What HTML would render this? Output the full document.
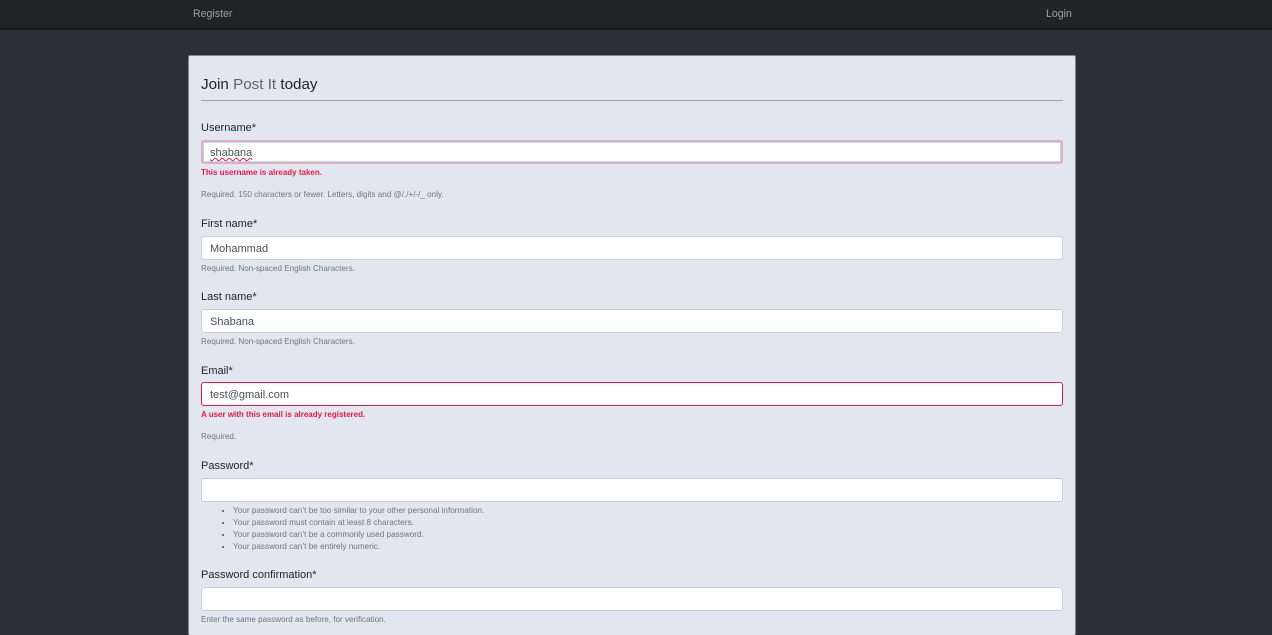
<!DOCTYPE html>
<html style="height:635px;overflow:hidden"><head><meta charset="utf-8"><style>
*{margin:0;padding:0;box-sizing:border-box}
body{width:1272px;height:635px;overflow:hidden;background:#2a3038;font-family:"Liberation Sans",sans-serif;position:relative}
.nav{position:absolute;left:0;top:0;width:1272px;height:30px;background:#202427;border-bottom:2px solid #17191b}
.nav span{position:absolute;top:8px;font-size:10.6px;color:#9aa1a8}
.card{position:absolute;left:188px;top:55px;width:888px;height:580px;background:#e2e7ef;border:1px solid #7d8890;border-bottom:none;border-radius:2px}
.a{position:absolute;left:201px;white-space:nowrap}
.title{font-size:15.2px;color:#212529;top:76px}
.title span{color:#5b6470}
.hr{position:absolute;left:201px;top:100px;width:862px;height:1px;background:#9aa6ae}
.lbl{font-size:11px;color:#212529}
.in{position:absolute;left:201px;width:862px;height:24px;background:#fff;border:1px solid #c7cdd3;border-radius:3px;font-size:11px;color:#495057;padding:6px 8px 0}
.err{font-size:8px;font-weight:bold;color:#e8174a}
.help{font-size:8.1px;color:#6c757d}
ul{position:absolute;left:233px;top:505px;font-size:8.2px;color:#6c757d;list-style:none;line-height:12px}
ul li{position:relative}
ul li:before{content:"";position:absolute;left:-11px;top:5px;width:2px;height:2px;background:#6c757d}
</style></head><body>
<div class="nav"><span style="left:193px">Register</span><span style="left:1046px">Login</span></div>
<div class="card"></div>
<div class="a title">Join <span>Post It</span> today</div>
<div class="hr"></div>
<div class="a lbl" style="top:122px">Username*</div>
<div class="in" style="top:140px;border:2px solid #e9a9b9;box-shadow:inset 0 0 0 1px #a8e3ee;padding:5px 7px 0;text-decoration:underline wavy #e8174a;text-decoration-thickness:1px">shabana</div>
<div class="a err" style="top:168px">This username is already taken.</div>
<div class="a help" style="top:190px">Required. 150 characters or fewer. Letters, digits and @/./+/-/_ only.</div>
<div class="a lbl" style="top:218px">First name*</div>
<div class="in" style="top:236px">Mohammad</div>
<div class="a help" style="top:264px">Required. Non-spaced English Characters.</div>
<div class="a lbl" style="top:291px">Last name*</div>
<div class="in" style="top:309px">Shabana</div>
<div class="a help" style="top:337px">Required. Non-spaced English Characters.</div>
<div class="a lbl" style="top:365px">Email*</div>
<div class="in" style="top:382px;border-color:#e8174a">test@gmail.com</div>
<div class="a err" style="top:410px">A user with this email is already registered.</div>
<div class="a help" style="top:432px">Required.</div>
<div class="a lbl" style="top:460px">Password*</div>
<div class="in" style="top:478px"></div>
<ul><li>Your password can’t be too similar to your other personal information.</li><li>Your password must contain at least 8 characters.</li><li>Your password can’t be a commonly used password.</li><li>Your password can’t be entirely numeric.</li></ul>
<div class="a lbl" style="top:569px">Password confirmation*</div>
<div class="in" style="top:587px"></div>
<div class="a help" style="top:615px">Enter the same password as before, for verification.</div>
</body></html>
